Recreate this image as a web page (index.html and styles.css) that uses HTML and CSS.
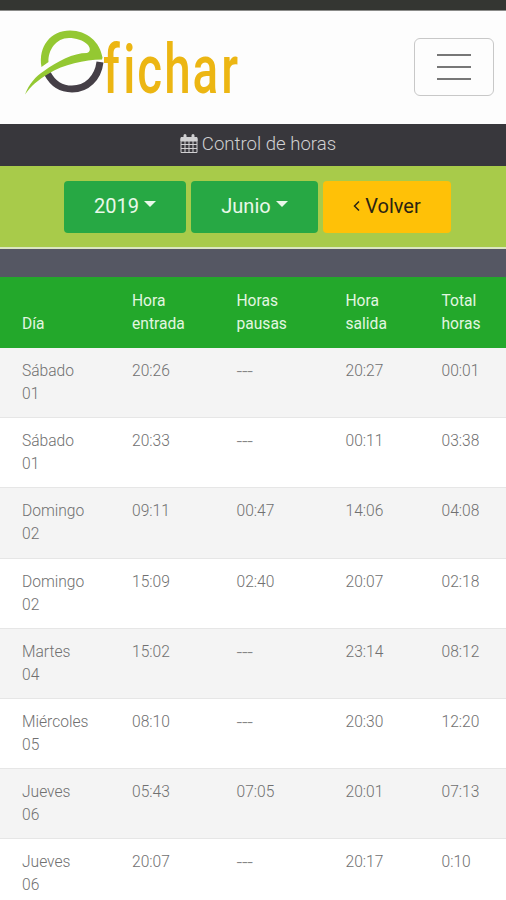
FILE: index.html
```html
<!DOCTYPE html>
<html lang="es">
<head>
    <meta charset="UTF-8">
    <meta name="viewport" content="width=device-width, initial-scale=1.0">
    <title>Efichar - Control de horas</title>
    <link rel="stylesheet" href="styles.css">
</head>
<body>
    <div class="statusbar"></div>
    <header class="navbar">
        <svg class="logo" width="220" height="92" viewBox="22 18 220 92" role="img" aria-label="efichar">
            <path class="logo-dark" d="M47.500 73.500 C53 84 61 89 72 89 C87 89 98 78 100 62" />
            <path class="logo-green" d="M41.500 67 C38 46 51 30.500 70 30.500 C87 30.500 100 42 102.500 57.500 L102 59.500 C84 60 64 64 48 74 C38 80 31 86 25 94.500 C29 84 36 76 44 71 C58 61 73 53 87 53 C90 52 91 49 88 45 C83 40 76 38 69 38 C56 38 48 50 48.500 62 Z" />
            <text class="logo-text" transform="scale(0.7 1)" x="147 176 196 234.500 275 316" y="93">fichar</text>
        </svg>
        <button class="toggler" type="button" aria-label="Menú">
            <span></span>
            <span></span>
            <span></span>
        </button>
    </header>
    <div class="titulo">
        <svg class="calendar" width="18" height="20" viewBox="0 0 18 20">
            <path class="cal-box" d="M1 4.500h16v14H1z" />
            <path class="cal-head" d="M1 3.500h16v3.500H1z" />
            <path class="cal-grid" d="M1 10.500h16M1 14.500h16M5 7v12M9 7v12M13 7v12" />
            <path class="cal-ring" d="M5 1.500v3M13 1.500v3" />
        </svg>
        <span>Control de horas</span>
    </div>
    <div class="filtros">
        <button class="btn btn-anio">2019<i class="caret"></i></button>
        <button class="btn btn-mes">Junio<i class="caret"></i></button>
        <button class="btn btn-volver">
            <svg width="7" height="12" viewBox="0 0 7 12"><path d="M6 1.500L1.500 6L6 10.500" /></svg>Volver
        </button>
    </div>
    <div class="separador"></div>
    <table class="horas">
        <thead>
            <tr>
                <th class="dia">Día</th>
                <th class="entrada">Hora entrada</th>
                <th class="pausas">Horas pausas</th>
                <th class="salida">Hora salida</th>
                <th>Total horas</th>
            </tr>
        </thead>
        <tbody>
            <tr><td>Sábado<br>01</td><td>20:26</td><td class="vacio">---</td><td>20:27</td><td>00:01</td></tr>
            <tr><td>Sábado<br>01</td><td>20:33</td><td class="vacio">---</td><td>00:11</td><td>03:38</td></tr>
            <tr><td>Domingo<br>02</td><td>09:11</td><td>00:47</td><td>14:06</td><td>04:08</td></tr>
            <tr><td>Domingo<br>02</td><td>15:09</td><td>02:40</td><td>20:07</td><td>02:18</td></tr>
            <tr><td>Martes<br>04</td><td>15:02</td><td class="vacio">---</td><td>23:14</td><td>08:12</td></tr>
            <tr><td>Miércoles<br>05</td><td>08:10</td><td class="vacio">---</td><td>20:30</td><td>12:20</td></tr>
            <tr><td>Jueves<br>06</td><td>05:43</td><td>07:05</td><td>20:01</td><td>07:13</td></tr>
            <tr><td>Jueves<br>06</td><td>20:07</td><td class="vacio">---</td><td>20:17</td><td>0:10</td></tr>
        </tbody>
    </table>
</body>
</html>
```
FILE: styles.css
```css
* {
    box-sizing: border-box;
}
body {
    margin: 0;
    height: 900px;
    overflow: hidden;
    background: white;
    font-family: Roboto, sans-serif;
}
.statusbar {
    height: 11px;
    background: #343632;
    border-bottom: 1px solid #8a8b89;
}
.navbar {
    height: 113px;
    padding: 0 12px 0 22px;
    display: flex;
    align-items: center;
    justify-content: space-between;
    background: #fdfdfd;
}
.logo {
    margin-bottom: 7px;
}
.logo-dark {
    fill: none;
    stroke: #453f47;
    stroke-width: 7;
}
.logo-green {
    fill: #94c832;
}
.logo-text {
    fill: #ecb613;
    font-family: Roboto, sans-serif;
    font-size: 68px;
    font-weight: 500;
}
.toggler {
    width: 80px;
    height: 58px;
    margin-bottom: 2px;
    padding: 0;
    display: flex;
    flex-direction: column;
    align-items: center;
    justify-content: center;
    gap: 10px;
    background: none;
    border: 1px solid #c8c8c8;
    border-radius: 6px;
}
.toggler span {
    width: 34px;
    height: 2px;
    background: #777;
}
.titulo {
    height: 42px;
    display: flex;
    align-items: center;
    justify-content: center;
    gap: 4px;
    padding: 0 0 2px 10px;
    background: #38373c;
    color: #d0d0d2;
    font-size: 18.600px;
    font-weight: 300;
}
.calendar path {
    fill: none;
    stroke: #d0d0d2;
}
.calendar .cal-head {
    fill: #d0d0d2;
}
.calendar .cal-ring {
    stroke-width: 3;
    stroke-linecap: round;
}
.filtros {
    height: 83px;
    padding: 15px 0 0 9px;
    display: flex;
    align-items: flex-start;
    justify-content: center;
    gap: 5px;
    background: #a8cb4a;
    border-bottom: 2px solid #dbe6c0;
}
.btn {
    height: 52px;
    padding: 0 0 2px;
    display: flex;
    align-items: center;
    justify-content: center;
    border: 0;
    border-radius: 4px;
    background: #27a844;
    color: #e9f8e9;
    font-family: Roboto, sans-serif;
    font-size: 20px;
}
.btn-anio {
    width: 122px;
}
.btn-mes {
    width: 127px;
}
.btn-volver {
    width: 128px;
    gap: 5px;
    background: #ffc107;
    color: #2a2413;
}
.btn-volver path {
    fill: none;
    stroke: #2a2413;
    stroke-width: 1.500;
}
.caret {
    margin: 0 0 4px 5px;
    border-top: 6px solid #e9f8e9;
    border-left: 6px solid transparent;
    border-right: 6px solid transparent;
}
.separador {
    height: 28px;
    background: #555763;
}
.horas {
    width: 506px;
    table-layout: fixed;
    border-collapse: separate;
    border-spacing: 0;
    font-size: 15.600px;
    line-height: 23px;
}
.dia {
    width: 110px;
}
.entrada {
    width: 104.500px;
}
.pausas {
    width: 109px;
}
.salida {
    width: 96px;
}
.horas th {
    height: 71px;
    padding: 12px 20px 12px 22px;
    vertical-align: bottom;
    text-align: left;
    font-weight: 400;
    background: #23a82b;
    color: #e2f6e0;
}
.horas td {
    height: 70.200px;
    padding: 12px 0 0 22px;
    vertical-align: top;
    font-weight: 300;
    color: #707070;
    border-bottom: 1px solid #e6e6e6;
}
.horas tbody tr:nth-child(odd) {
    background: #f4f4f4;
}
.horas .vacio {
    font-size: 20px;
    letter-spacing: -0.300px;
    color: #858585;
}
```
